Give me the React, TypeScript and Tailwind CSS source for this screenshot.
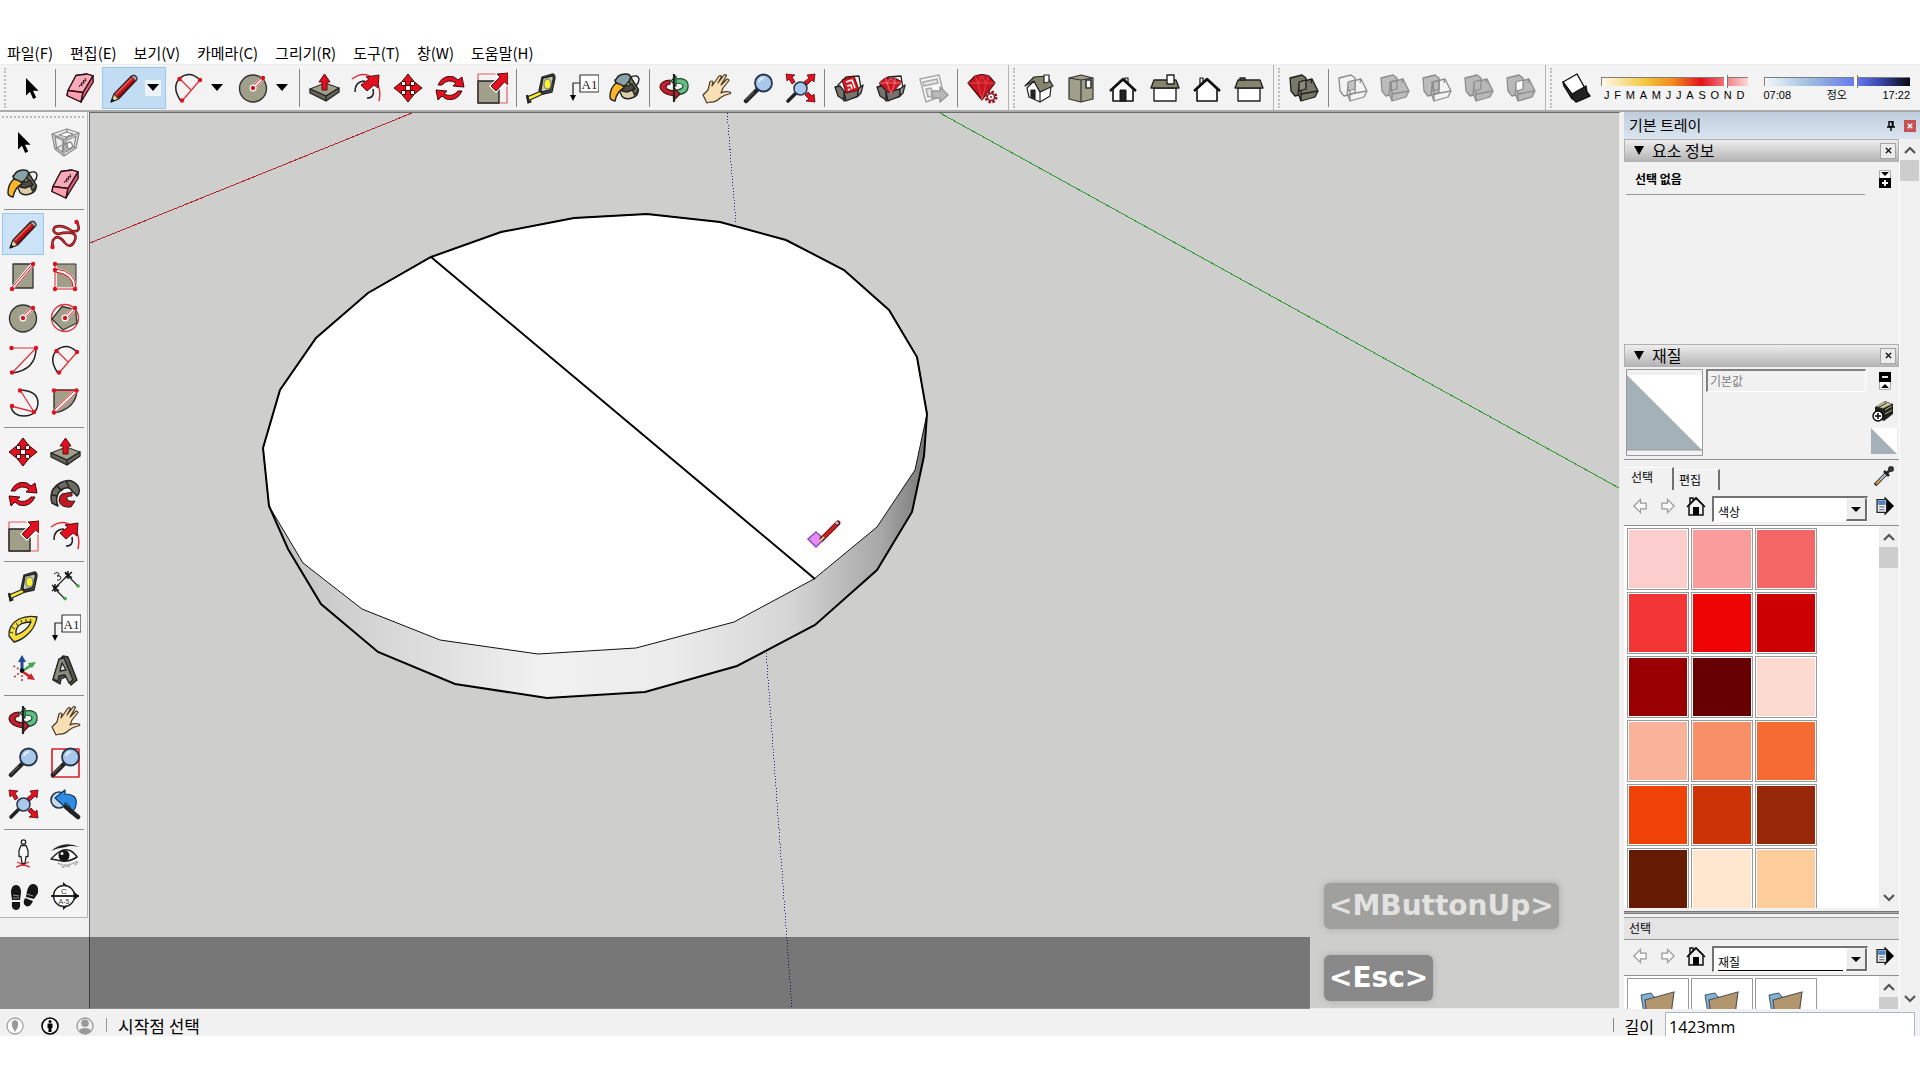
import React, { ReactNode } from "react";

const STONE = "#a0a08a";
const RED = "#e3101f";

function Icon({ children }: { children: ReactNode }) {
  return (
    <svg viewBox="0 0 32 32" className="size-8 shrink-0" fill="none" strokeLinejoin="round" aria-hidden="true">
      {children}
    </svg>
  );
}

function Dots({ at }: { at: number[][] }) {
  return (
    <g fill="#d8141f">
      {at.map(([x, y]) => (
        <circle key={`${x}-${y}`} cx={x} cy={y} r="2.2" />
      ))}
    </g>
  );
}

const cursor = <path d="M11 6v17.5l4-3.8 3.2 7.3 3-1.4-3.2-6.9h5.6z" fill="#000" />;

const eraser = (
  <g stroke="#2b1219" strokeWidth="1.3">
    <path d="M12 3.5 23 2l6 1.8-7.2 15.5L17 30 3 23.5l1-5z" fill="#f48ba0" />
    <path d="M12 3.5 23 2l6 1.8-10 16.7L4 18.5z" fill="#f9a9b8" />
    <path d="M4 18.5 19 20.5 17 30 3 23.5z" fill="#ff9fb0" />
    <path d="m19 20.500 10-16.700.3 6.200L17 30z" fill="#d9607a" />
    <path d="m15 15 1.500-2.500 1.500 1.500-.5-3.500 2.500 1-.8-3 2.600.6-.8-3" strokeWidth="1" />
  </g>
);

const pencil = (
  <g>
    <path d="m3 30 3-8L23 4.500q3-2.500 5 0 1.800 2.300-.5 4.500L10.500 27z" fill="#c5161d" stroke="#222" strokeWidth="1.200" />
    <path d="M7.500 22.500 24.500 5.500" stroke="#ef5a55" strokeWidth="1.500" />
    <path d="M9.800 25.500 27 8.500" stroke="#6f0a10" strokeWidth="1.500" />
    <path d="m23 4.500 4.800 4.700q2.500-2.400.4-4.700-2.200-2.400-5.200 0z" fill="#b99a9d" stroke="#222" />
    <path d="m3 30 3-8 4.500 5z" fill="#e8cf9a" stroke="#222" />
    <path d="m3 30 1.200-3.600 2.400 2z" fill="#111" />
  </g>
);

const bucket = (
  <g stroke="#222" strokeWidth="1.400">
    <path d="M22 5q7-3 8 2 0 4-3 7" />
    <path d="m6 8 14-5 9 14q1 6-5 8.500-7 3-11-1z" fill="#dccfa8" />
    <path d="m18 5 3-1 8.500 14-4 5z" fill="#6f6f60" />
    <path d="M12 14q6 1 11-2l3 5-8 3-5-1z" fill="#4c4c40" />
    <path d="M6 9q3-7 10-7t5 5-6 7-9-5z" fill="#87a3a5" />
    <path d="M7 11q8 2 8 5-7 3-9 13-5-1-5-4 0-9 6-14z" fill="#fbb52b" />
  </g>
);

const cube = (
  <g stroke="#8a8a8a" strokeWidth="1.300">
    <path d="m3 8 15-5 12 4-3 15-12 8L6 23z" fill="#ededed" />
    <path d="m3 8 12 5 15-6M15 13v17M18 3l-1 14-11 6M17 17l10 5M6 10.500l8 4-.5 12-6-5zM17 14.500l10-4.500-2 11-8 5z" />
    <path d="m10 9 8-3 6 2-7 3zM18 18q3-4 5 0t-4 5z" fill="#fff" />
  </g>
);

const freehand = (
  <g>
    <path d="M28 4q5 11-5 9Q13 6 6 9q-4 5 3 7 8-2 14-1 6 2 2 9-4 7-9 1-6-8-10-5-4 3-2 9" stroke="#6e0d13" strokeWidth="2.600" />
    <path d="M28 4q5 11-5 9Q13 6 6 9q-4 5 3 7 8-2 14-1 6 2 2 9-4 7-9 1-6-8-10-5-4 3-2 9" stroke="#c9343b" strokeWidth="1.200" />
    <Dots at={[[27.500, 4], [3.500, 29]]} />
  </g>
);

const rect = (
  <g>
    <path d="M6 4h20v24H6z" fill={STONE} stroke="#333" strokeWidth="1.300" />
    <path d="M5 29 26 4" stroke="#fff" strokeWidth="4" />
    <path d="m4.500 28 21-24M6.500 29.500l20-24" stroke={RED} />
    <Dots at={[[5, 29], [26, 4]]} />
  </g>
);

const rotRect = (
  <g>
    <path d="M6 4h21v24H6z" fill={STONE} stroke="#333" strokeWidth="1" />
    <path d="M6 4v25h20q0-17-20-19" stroke="#fff" strokeWidth="3.600" />
    <path d="M6 4v25h20M6 9q21 2 21 19M6 12q18 2 18 15" stroke={RED} />
    <Dots at={[[6, 4], [6, 10], [6, 29], [26, 29]]} />
  </g>
);

const circle = (
  <g>
    <circle cx="16" cy="16.500" r="13.500" fill={STONE} stroke="#333" strokeWidth="1.400" />
    <path d="m16 16 10-10" stroke="#fff" strokeWidth="4" />
    <path d="m15.500 15 9-9.500M17 17l9.500-10" stroke={RED} />
    <circle cx="16" cy="16" r="3.500" fill="#fff" />
    <Dots at={[[16, 16], [26, 6]]} />
  </g>
);

const polygon = (
  <g>
    <circle cx="16" cy="16" r="13.500" stroke="#e0303a" strokeWidth="1.300" />
    <path d="m13 4.500 13.500 3L28 21l-14 7L3 17z" fill={STONE} stroke="#333" strokeWidth="1.300" />
    <path d="m16 16 10-10" stroke="#fff" strokeWidth="4" />
    <path d="m15.500 15 9-9.500M17 17l9.500-10" stroke={RED} />
    <circle cx="16" cy="16" r="3.500" fill="#fff" />
    <Dots at={[[16, 16], [26, 6]]} />
  </g>
);

const arc = (
  <g>
    <path d="M29 4q0 22-24 25" stroke="#222" strokeWidth="1.500" />
    <path d="M5 4h24L5 29" stroke="#e0303a" strokeWidth="1.200" />
    <Dots at={[[4.500, 4], [29, 4], [5, 28.500]]} />
  </g>
);

const arc2 = (
  <g>
    <path d="M9 29Q-1 15 8 6q10-8 20 2" stroke="#222" strokeWidth="1.500" />
    <path d="M10 29 28 8M8 7l11 11" stroke="#e0303a" strokeWidth="1.300" />
    <Dots at={[[10, 28.500], [28, 8], [7.500, 7]]} />
  </g>
);

const arc3 = (
  <g>
    <path d="M14 4q17 1 17 13-1 13-14 13-11 0-13-9" stroke="#222" strokeWidth="1.500" />
    <path d="m4 20 23 6L13 4" stroke="#e0303a" strokeWidth="1.300" />
    <Dots at={[[13, 4.500], [5, 20], [27, 26]]} />
  </g>
);

const pie = (
  <g>
    <path d="M5 4h23q-1 19-23 23z" fill={STONE} stroke="#333" strokeWidth="1.400" />
    <path d="M5 26 27 5" stroke="#fff" strokeWidth="4" />
    <path d="M5 4.500h23M4 25 26 4M6 27 28 6" stroke={RED} />
    <Dots at={[[5, 4.500], [27.500, 4.500], [5, 26.500]]} />
  </g>
);

const move = (
  <g fill={RED} stroke="#3b0a0d" strokeWidth="1">
    <path d="m16 2 6 7.500h-3.500v4h-5v-4H10zM16 30l-6-7.500h3.500v-4h5v4H22zM2 16l7.500-6v3.500h4v5h-4V22zM30 16l-7.500 6v-3.500h-4v-5h4V10z" />
  </g>
);

const pushPull = (
  <g>
    <path d="m2 17 15-6 14 5-13 8z" fill={STONE} stroke="#333" strokeWidth="1.300" />
    <path d="m2 17 16 7v5L2 21zM18 24l13-8v4l-13 9z" fill="#65655a" stroke="#222" strokeWidth="1.300" />
    <path d="m16.500 2 5.500 8h-3v8h-5v-8h-3z" fill={RED} stroke="#5c0a10" />
  </g>
);

const rotate = (
  <g fill={RED} stroke="#3b0a0d" strokeWidth="1">
    <path d="M4 13Q9 2 20 5l4 3 4-3 2 10-11-1 3-3q-8-5-14 2z" />
    <path d="M28 19q-5 11-16 8l-4-3-4 4-2-10 11 1-3 3q8 4 14-3z" />
  </g>
);

const followMe = (
  <g stroke="#222" strokeWidth="1.500">
    <path d="M3 25Q-1 12 11 5 22-1 29 8q3 6-1 10l-5-5Q20 7 12 12q-7 7-3 16z" fill="#6a6a5f" />
    <path d="m8 8 5 5M17 3l3 6M3 17l6 1" />
    <path d="m13 16 10-2v4q-6 0-5 3t8 2l-4 6q-10 1-12-6 0-5 3-7z" fill="#c2181f" strokeWidth="1" />
  </g>
);

const scale = (
  <g>
    <path d="M2 2h29v29H2z" stroke="#e85b62" strokeWidth="1.200" />
    <path d="M2 9h21v22H2z" fill={STONE} stroke="#222" strokeWidth="1.400" />
    <path d="M32 1v12l-3.500-3L20 19l-5-5 9-9-3-3z" fill={RED} stroke="#fff" strokeWidth="3" />
    <path d="M32 1v12l-3.500-3L20 19l-5-5 9-9-3-3z" fill={RED} stroke="#5c0a10" />
  </g>
);

const offset = (
  <g>
    <path d="M2 7Q14-2 24 7q8 8 5 22" stroke="#e0303a" strokeWidth="1.500" />
    <path d="M5 20Q5 9 15 9M23 17q2 9-6 9" stroke="#222" strokeWidth="1.500" />
    <path d="m29 3-1 13-4-3-7 6-6-6 8-6-3-2z" fill={RED} stroke="#5c0a10" />
  </g>
);

const tape = (
  <g stroke="#222" strokeWidth="1.300">
    <path d="m2 25 14-6 2 3-13 6 1 2-3 1z" fill="#f5e92d" />
    <path d="M17 5 27 2q3 0 3 4l-3 14-9 2-4-3z" fill="#5a5a4e" />
    <path d="m18 6 9-2q2 0 1 4l-3 10-8 2-1-2z" fill="#c9c9b2" />
    <ellipse cx="22.500" cy="12" rx="3.500" ry="5" fill="#f8f42c" stroke="#888" />
    <path d="m2 23 2 8" strokeWidth="2.500" />
  </g>
);

const dimension = (
  <g>
    <path d="m6 18 13-13M4 17l13 13M16 3l13 13" stroke="#222" strokeWidth="1.200" />
    <path d="m3 15 7 6M3 21l7-6M6 14v8M16 2l7 6M16 8l7-6M19 1v8" stroke="#111" strokeWidth="1.400" />
    <circle cx="16" cy="28.500" r="1.800" fill="#3aab45" />
    <circle cx="29" cy="16" r="1.800" fill="#3aab45" />
    <path d="M5 4q4-3 5 0 0 2-2 2 4-1 4 2-1 3-4 2" stroke="#222" />
  </g>
);

const protractor = (
  <g stroke="#222" strokeWidth="1.300">
    <path d="M7 30 2 24Q1 13 12 7q9-4 18-2-2 11-9 17-6 6-14 8z" fill="#f3dd3b" />
    <path d="M9 23q-1-8 5-11 4-2 10-2-4 9-15 13z" fill="#f4f4f4" />
    <path d="m3 20 3 1m-1-6 3 2m1-6 2 3m3-6 1 3m4-4v3m5-3-1 3" strokeWidth=".9" />
  </g>
);

const label = (
  <g>
    <path d="M13 3h19v17H13z" fill="#fff" stroke="#333" strokeWidth="1.200" />
    <path d="M13 11H6v14" stroke="#222" strokeWidth="1.200" />
    <path d="m3 23 3 6 3-6z" fill="#000" />
    <text x="22.500" y="16.500" fontSize="13" textAnchor="middle" fill="#222" fontFamily="'Liberation Serif', serif">A1</text>
  </g>
);

const axes = (
  <g>
    <path d="M15 17 5 11M15 17 6 24M15 17v12" stroke="#b33" strokeDasharray="2 2" strokeWidth="1.500" />
    <path d="M13.500 17V8H11l4-7 4 7h-2.500v9z" fill="#1c4b96" />
    <path d="m15 16 7-5-1-2 8-1-4 6-1-1-8 5z" fill="#44a852" />
    <path d="m15 16 8 5 1-2 4 7-8-1 1-2-7-5z" fill="#c8242b" />
    <circle cx="15" cy="16.500" r="2.200" fill="#111" />
  </g>
);

const text3d = (
  <g stroke="#222" strokeWidth="1.300">
    <path d="m4 26 6-20 4-4 5 1 9 23-6 5-5-8-5 2-1 5z" fill="#55564d" />
    <path d="m4 25 6-20 5-1 9 22-4 3-4-8-6 1-1 5z" fill="#8b8b7c" />
    <path d="m11 17 2-8 4 7z" fill="#eee" />
  </g>
);

const orbit = (
  <g strokeWidth="1.200">
    <path d="M17 7q14-2 13 8 0 7-12 8l1-5q6-1 6-4 0-3-8-3z" fill="#63be85" stroke="#16482c" />
    <path d="m18 4-5 5 5 5z" fill="#8fdba6" stroke="#16482c" />
    <path d="M12 8Q2 9 2 15q1 7 14 9v4l6-6-6-6v3q-8-1-8-4 0-2 4-3z" fill="#bd222e" stroke="#4b0c12" />
    <path d="M16 2v28" stroke="#222" strokeWidth="2.200" />
  </g>
);

const pan = (
  <path d="m3 23 5-5 2-8q2-2 3 0l-1 4 7-10q2-1 2.500.5L18 11l6-8q2-1 2.500.5L21 13l6-6q2 0 2 1.500L23 16l-2 5q4-2 9-1 2 1-1 2-5 1-9 4-5 5-10 4l-3 1z" fill="#f8dfb5" stroke="#4a3a25" strokeWidth="1.200" />
);

const zoom = (
  <g>
    <path d="m4 29 11-11" stroke="#222" strokeWidth="4.500" strokeLinecap="round" />
    <path d="m4 28 8-8" stroke="#555" strokeWidth="1.200" />
    <circle cx="21.500" cy="11" r="8.500" fill="#a9c8ec" stroke="#26364b" strokeWidth="1.800" />
    <path d="M17 10q1-4 5-4" stroke="#e3f0fc" strokeWidth="2" />
  </g>
);

const zoomWindow = (
  <g>
    <path d="M3 3h27v28H3z" stroke="#d81e27" strokeWidth="1.600" />
    {zoom}
  </g>
);

const redCorners = (
  <g fill={RED} stroke="#5c0a10" strokeWidth=".8">
    <path d="m2 2 9 1-3 2 3 5-3 2-3-5-2 2zM31 2l-1 8-2-2-5 5-3-3 5-4-2-3zM31 30l-9-1 3-2-4-4 3-3 4 4 2-2z" />
  </g>
);

const zoomExtents = (
  <g>
    {redCorners}
    <path d="m4 29 8-8" stroke="#222" strokeWidth="3.600" strokeLinecap="round" />
    <circle cx="16.500" cy="16.500" r="6.500" fill="#a9c8ec" stroke="#26364b" strokeWidth="1.500" />
  </g>
);

const previous = (
  <g>
    <circle cx="10" cy="12" r="8" fill="#c5d9ee" stroke="#26364b" strokeWidth="1.600" />
    <path d="m6 10 10-8v4q13 0 11 11-1 6-6 8 1-9-5-10v4z" fill="#2f8be0" stroke="#123b66" strokeWidth="1.200" />
    <path d="m17 19 12 10" stroke="#222" strokeWidth="4.500" strokeLinecap="round" />
  </g>
);

const positionCamera = (
  <g stroke="#222" strokeWidth="1.300">
    <path d="m9 29 7-3 7 3M10 24l12 5M22 24l-12 5" stroke="#e0303a" />
    <circle cx="16.500" cy="4" r="2.200" fill="#fff" />
    <path d="M14 7.500h5l2 5v6h-2l-1 7h-3l-1-7h-2v-6z" fill="#fff" />
  </g>
);

const lookAround = (
  <g>
    <path d="M2 13Q14 2 31 9q-10-2-14 0Q8 10 2 13z" fill="#222" />
    <path d="M2 21q10-11 17-9 5 1 9 7-8 5-15 4-5-1-11-2z" fill="#fff" stroke="#222" strokeWidth="1.600" />
    <circle cx="15" cy="17.500" r="5.500" fill="#111" />
    <circle cx="13" cy="15.500" r="1.500" fill="#fff" />
    <path d="M9 25q8 5 20-2M13 29l8-1M26 27l3-3" stroke="#999" strokeWidth="1.500" strokeDasharray="2 1" />
  </g>
);

const walk = (
  <g fill="#161616">
    <path d="M4 13q0-8 5-8t5 8l-1 7H5zM5 22h8q1 8-4 8t-4-8zM20 11q2-8 7-7t4 9l-4 6-8-2zM18 18l8 3q-3 7-7 5-4-2-1-8z" />
    <path d="m6 15 6 1M6 18h6M20 14l6 2" stroke="#999" />
  </g>
);

const section = (
  <g>
    <path d="m14 2 16 14-16 14z" fill="#111" />
    <circle cx="15" cy="16" r="10.500" fill="#fff" stroke="#222" strokeWidth="1.400" />
    <path d="M2 16h28" stroke="#111" strokeWidth="1.800" />
    <g fill="#333" fontFamily="'Liberation Sans', sans-serif" textAnchor="middle">
      <text x="15" y="14" fontSize="8">C</text>
      <text x="15" y="24" fontSize="7">A-5</text>
    </g>
  </g>
);

const openBox = (
  <g stroke="#222" strokeWidth="1.300">
    <path d="m5 13 8-8 13-1 2 13-4 8-13 4z" fill="#f4f4f4" />
    <path d="m2 15 5-1 4 5v9l-6-4zM11 20l14-3v7l-12 5z" fill="#77736c" />
    <path d="m25 17 5-4-2 8-3 3z" fill="#a09c92" />
  </g>
);

const warehouse = (
  <g>
    {openBox}
    <path d="m9 8 12-4 5 14-13 3z" fill="#d81924" stroke="#5c0a10" />
    <path d="m13 10 6-2 3 8m-8-2 4-1 1 4m-4 1 2-1" stroke="#fff" strokeWidth="1.600" />
  </g>
);

const gem = (
  <g stroke="#5c0a10">
    <path d="m4 11 6-5h10l7 4-11 12z" fill="#cf1622" />
    <path d="M4 11h23M10 6l2 5 4 11 4-11 0-5M12 11l4-5 4 5" stroke="#f38b8b" strokeWidth=".8" />
  </g>
);

const extensions = (
  <g>
    {openBox}
    {gem}
  </g>
);

const layout = (
  <g stroke="#a9a9a9" strokeWidth="1.500">
    <path d="m3 7 19-4 5 20-18 7z" fill="#f8f8f8" />
    <path d="m6 10 14-3 1 4-14 3zM9 17l5-1 2 8-5 1z" fill="#e2e2e2" />
    <path d="M15 19h8v-4l8 8-8 7v-4h-8z" fill="#b9b9b9" stroke="#999" />
  </g>
);

const rubyManager = (
  <g>
    <path d="m2 11 7-7q7-3 14 0l6 7-13 17z" fill="#c81622" stroke="#4b0c12" strokeWidth="1.200" />
    <path d="M2 11h27M9 4l3 7 4 17 4-17 3-7M12 11l4-7 4 7" stroke="#e84f55" strokeWidth=".8" />
    <circle cx="25" cy="25" r="5" fill="#f3f3f3" stroke="#8f1f26" strokeWidth="3" strokeDasharray="2.400 1.500" />
    <circle cx="25" cy="25" r="3.600" fill="#f3f3f3" stroke="#8f1f26" strokeWidth="1.600" />
    <circle cx="25" cy="25" r="1" fill="#8f1f26" />
  </g>
);

const isoHouse = (
  <g stroke="#222" strokeWidth="1.200">
    <path d="m4 16 7-7 6 11v10L6 25zM17 20l11-6-1 10-10 6z" fill="#fff" />
    <path d="m2 14 9-9 13-1 6 10-13 6-6-11z" fill="#85856f" />
    <path d="M8 18h4v9l-4-2z" fill="#222" />
    <path d="M21 3h5v7l-5 1z" fill="#fff" />
  </g>
);

const topHouse = (
  <g stroke="#333" strokeWidth="1.200">
    <path d="M4 6 16 3l12 3v21l-12 3-12-3z" fill={STONE} />
    <path d="M16 8v22M4 6l12 2 12-2" />
    <path d="M21 8h5v8h-5z" fill="#fff" strokeWidth="1.600" />
  </g>
);

const gable = (chimneyX: number, door: boolean) => (
  <g stroke="#111">
    <path d={`M${chimneyX} 6h3v7h-3z`} fill="#fff" strokeWidth="1.200" />
    <path d="M6 17v12h20V17L16 8z" fill="#fff" strokeWidth="1.600" />
    <path d="M3 19 16 7l13 12" strokeWidth="2.400" />
    {door && <path d="M13 18h6v11h-6z" fill="#222" />}
  </g>
);

const sideHouse = (chimney: ReactNode) => (
  <g stroke="#222" strokeWidth="1.400">
    <path d="M5 16h22v13H5z" fill="#fff" />
    <path d="M5 8h22l3 8H2z" fill="#85856f" />
    {chimney}
  </g>
);

const rightHouse = sideHouse(<path d="M18 3h7v9h-7z" fill="#fff" />);
const leftHouse = sideHouse(<path d="M7 6h5v2H7z" fill="#85856f" />);

function solids(stroke: string, a: string, b: string, mid: string) {
  return (
    <g stroke={stroke} strokeWidth="1.300">
      <path d="m2 6 12-3 4 3v15L7 24l-4-5z" fill={a} />
      <path d="m12 10 12-3 6 12-3 6-14 4-3-8z" fill={b} />
      <path d="m13 22 17-3M13 22v7M12 10l1 12M24 7l-1 4" />
      <path d="m11 10 7-2v9l-7 2z" fill={mid} />
    </g>
  );
}

const shadow = (
  <g stroke="#111" strokeWidth="1.400">
    <path d="M3 10 17 2l9 16-14 8z" fill="#fff" />
    <path d="m12 22 14-8 1 6 3 4-14 6-4-4z" fill="#222" />
    <path d="m3 10 9 12v5L4 14z" fill="#333" />
  </g>
);

type Tool = { name: string; icon: ReactNode };
const t = (name: string, icon: ReactNode): Tool => ({ name, icon });

function ToolButton({ tool, active = false }: { tool: Tool; active?: boolean }) {
  return (
    <button
      type="button"
      aria-label={tool.name}
      title={tool.name}
      className={
        active
          ? "flex h-[42px] w-[42px] shrink-0 items-center justify-center border border-[#99c8ee] bg-[#cce3f7]"
          : "flex h-[42px] w-[42px] shrink-0 items-center justify-center"
      }
    >
      <Icon>{tool.icon}</Icon>
    </button>
  );
}

function Caret() {
  return (
    <svg viewBox="0 0 12 8" className="h-2 w-3" aria-hidden="true">
      <path d="M0 0h12L6 7z" fill="#000" />
    </svg>
  );
}

function SplitButton({ tool, active = false }: { tool: Tool; active?: boolean }) {
  return (
    <div
      className={
        active
          ? "flex h-[42px] w-16 shrink-0 items-center border border-[#99c8ee] bg-[#c2dcf3]"
          : "flex h-[42px] w-16 shrink-0 items-center"
      }
    >
      <button type="button" aria-label={tool.name} className="flex w-[42px] items-center justify-center">
        <Icon>{tool.icon}</Icon>
      </button>
      <button
        type="button"
        aria-label={`${tool.name} 옵션`}
        className={active ? "flex h-4 w-4 items-center justify-center bg-[#eef3f8]" : "flex h-4 w-4 items-center justify-center"}
      >
        <Caret />
      </button>
    </div>
  );
}

const Divider = () => (
  <div className="flex w-[7px] shrink-0 justify-center">
    <div className="h-[38px] w-px bg-[#858585]" />
  </div>
);

const Grip = ({ first = false }: { first?: boolean }) => (
  <div className={first ? "flex h-full w-[10px] shrink-0 items-center pl-1" : "ml-[3px] flex h-full w-[10px] shrink-0 items-center border-l border-[#b4b4b4] pl-1"}>
    <div className="h-[40px] border-l-2 border-dotted border-[#bdbdbd]" />
  </div>
);

const menus = ["파일(F)", "편집(E)", "보기(V)", "카메라(C)", "그리기(R)", "도구(T)", "창(W)", "도움말(H)"];

const editTools = [t("밀기/끌기", pushPull), t("오프셋", offset), t("이동", move), t("회전", rotate), t("배율", scale)];
const noteTools = [t("줄자", tape), t("텍스트", label), t("페인트통", bucket)];
const cameraTools = [t("궤도", orbit), t("팬", pan), t("확대/축소", zoom), t("범위 확대", zoomExtents)];
const warehouseTools = [t("3D Warehouse", warehouse), t("Extension Warehouse", extensions), t("LayOut", layout)];
const viewTools = [
  t("등각", isoHouse),
  t("상단", topHouse),
  t("전면", gable(18, true)),
  t("우측", rightHouse),
  t("후면", gable(9, false)),
  t("좌측", leftHouse),
];
const solidTools = [
  t("교차", solids("#8d8d8d", "none", "none", "#c4c4c4")),
  t("결합", solids("#8d8d8d", "#bcbcbc", "#bcbcbc", "none")),
  t("빼기", solids("#8d8d8d", "#bcbcbc", "none", "none")),
  t("트림", solids("#8d8d8d", "#b8b8b8", "#b8b8b8", "#b8b8b8")),
  t("분할", solids("#8d8d8d", "#b8b8b8", "#b8b8b8", "#fff")),
];

const tools = (list: Tool[]) => list.map((x) => <ToolButton key={x.name} tool={x} />);

const thumb =
  "[&::-webkit-slider-thumb]:-mt-[3px] [&::-webkit-slider-thumb]:h-[13px] [&::-webkit-slider-thumb]:w-1 [&::-webkit-slider-thumb]:appearance-none [&::-webkit-slider-thumb]:border-r [&::-webkit-slider-thumb]:border-[#777] [&::-webkit-slider-thumb]:bg-white [&::-webkit-slider-runnable-track]:h-[9px] [&::-webkit-slider-runnable-track]:border-t [&::-webkit-slider-runnable-track]:border-l [&::-webkit-slider-runnable-track]:border-[#7d7d7d]";

function TopToolbar() {
  return (
    <div className="flex h-12 shrink-0 items-center overflow-hidden border-t border-[#ececec] border-b-2 border-b-[#a9a9a9] bg-[#f3f3f3]">
      <Grip first />
      <ToolButton tool={t("선택", cursor)} />
      <Divider />
      <ToolButton tool={t("지우개", eraser)} />
      <div className="flex gap-px pl-px">
        <SplitButton tool={t("선", pencil)} active />
        <SplitButton tool={t("호", arc2)} />
        <SplitButton tool={t("원", circle)} />
      </div>
      <Divider />
      {tools(editTools)}
      <Divider />
      {tools(noteTools)}
      <Divider />
      {tools(cameraTools)}
      <Divider />
      {tools(warehouseTools)}
      <Divider />
      {tools([t("확장 관리자", rubyManager)])}
      <div className="w-0.5 shrink-0" />
      <Grip />
      {tools(viewTools)}
      <Grip />
      {tools([t("외부 셸", solids("#1e1e1a", "#77776a", "#77776a", "#8a8a7a"))])}
      <Divider />
      {tools(solidTools)}
      <Grip />
      {tools([t("그림자", shadow)])}
      <div className="flex flex-1 gap-4 pr-[10px] pl-1 font-['Liberation_Sans','Noto_Sans_CJK_KR',sans-serif] text-[11px] leading-3 text-black">
        <div className="flex min-w-0 flex-1 flex-col">
          <input
            type="range"
            aria-label="날짜"
            defaultValue={86}
            className={`${thumb} h-[13px] w-full appearance-none bg-transparent [&::-webkit-slider-runnable-track]:bg-[linear-gradient(90deg,#fff9e8,#f3c63c_30%,#f08c1e_48%,#e3131a_68%,#ee6a70_82%,#fbdada)]`}
          />
          <div className="mt-px flex justify-between px-[3px]">
            {"JFMAMJJASOND".split("").map((m, i) => (
              <span key={i}>{m}</span>
            ))}
          </div>
        </div>
        <div className="flex min-w-0 flex-1 flex-col">
          <input
            type="range"
            aria-label="시간"
            defaultValue={63}
            className={`${thumb} h-[13px] w-full appearance-none bg-transparent [&::-webkit-slider-runnable-track]:bg-[linear-gradient(90deg,#f4f8fb,#9fbfe0_30%,#5f74ea_65%,#3a47a8_80%,#05060c)]`}
          />
          <div className="mt-px flex justify-between">
            <span>07:08</span>
            <span>정오</span>
            <span>17:22</span>
          </div>
        </div>
      </div>
    </div>
  );
}

const sideGroups: Tool[][] = [
  [t("선택", cursor), t("구성 요소 만들기", cube), t("페인트통", bucket), t("지우개", eraser)],
  [
    t("선", pencil),
    t("프리핸드", freehand),
    t("직사각형", rect),
    t("회전된 직사각형", rotRect),
    t("원", circle),
    t("다각형", polygon),
    t("호", arc),
    t("2점 호", arc2),
    t("3점 호", arc3),
    t("파이", pie),
  ],
  [t("이동", move), t("밀기/끌기", pushPull), t("회전", rotate), t("따라가기", followMe), t("배율", scale), t("오프셋", offset)],
  [t("줄자", tape), t("치수", dimension), t("각도기", protractor), t("텍스트", label), t("축", axes), t("3D 텍스트", text3d)],
  [t("궤도", orbit), t("팬", pan), t("확대/축소", zoom), t("창 확대", zoomWindow), t("범위 확대", zoomExtents), t("이전", previous)],
  [t("카메라 배치", positionCamera), t("둘러보기", lookAround), t("걷기", walk), t("단면", section)],
];

function SideToolbar() {
  return (
    <aside className="w-[89px] shrink-0 overflow-hidden bg-[#f1f1f1]">
      <div className="w-[88px] border-r border-b border-[#b4b4b4] bg-[#f4f4f4] pt-1 pl-0.5">
        <div className="mb-[3px] h-0.5 w-[82px] border-t-2 border-dotted border-[#b9b9b9]" />
        {sideGroups.map((group, gi) => (
          <div key={gi}>
            {gi > 0 && (
              <div className="flex h-2 items-center px-0.5">
                <div className="h-px w-20 bg-[#8c8c8c]" />
              </div>
            )}
            <div className="grid w-[84px] grid-cols-2">
              {group.map((tool, i) => (
                <ToolButton key={tool.name} tool={tool} active={gi === 1 && i === 0} />
              ))}
            </div>
          </div>
        ))}
      </div>
    </aside>
  );
}

const topRim = "263,448 280,390 316,338 368,293 431,257 501,232 574,218 647,214 720,222 786,240 844,270 889,310 917,357 927,414";
const topFace = `${topRim} 915,470 877,527 814,579 734,622 636,648 538,654 440,640 362,609 303,563 269,506`;
const baseRim = "927,414 924,456 912,512 877,570 815,625 737,666 645,692 547,698 455,684 378,652 321,604 288,549 269,506 263,448";

function Viewport() {
  return (
    <main className="relative min-w-0 flex-1 overflow-hidden border border-[#ededed] border-t-[#6b6b6b] border-l-[#6b6b6b] bg-[#cececd]">
      <svg viewBox="90 113 1529 895" preserveAspectRatio="xMinYMin slice" className="absolute inset-0 h-full w-full" fill="none" role="img" aria-label="모델">
        <defs>
          <linearGradient id="rim" gradientUnits="userSpaceOnUse" x1="263" y1="0" x2="927" y2="0">
            <stop offset="0" stopColor="#bdbdbd" />
            <stop offset=".12" stopColor="#cfcfcf" />
            <stop offset=".42" stopColor="#f1f1f1" />
            <stop offset=".62" stopColor="#ebebeb" />
            <stop offset=".8" stopColor="#d4d4d4" />
            <stop offset=".93" stopColor="#a8a8a8" />
            <stop offset="1" stopColor="#787878" />
          </linearGradient>
        </defs>
        <g shapeRendering="crispEdges">
          <path d="M90 243 412 113" stroke="#b3252b" />
          <path d="M940 113 1619 488" stroke="#2f9a34" />
          <path d="m727 113 9 109M766 650l26 359" stroke="#23238c" strokeDasharray="1 2" />
        </g>
        <polygon points={`${topRim} ${baseRim}`} fill="url(#rim)" />
        <polygon points={topFace} fill="#fff" stroke="#111" strokeWidth="1" />
        <polyline points={topRim} stroke="#000" strokeWidth="2" />
        <polyline points={baseRim} stroke="#000" strokeWidth="2" />
        <path d="m431 257 384 322" stroke="#000" strokeWidth="2" />
        <path d="m816 532 8 7-8 8-8-8z" fill="#e88cf5" stroke="#8a4fb0" strokeWidth="1.500" />
        <path d="m822 539 16-16" stroke="#5f1216" strokeWidth="5" strokeLinecap="round" />
        <path d="m823 538 13-13" stroke="#d3201f" strokeWidth="3" />
        <path d="m836 524 2-2" stroke="#c9b3b3" strokeWidth="3" />
        <path d="m820 541 4-4" stroke="#d9c6a0" strokeWidth="2" />
      </svg>
      <div className="absolute right-[55px] bottom-[7px] flex w-[240px] flex-col items-start gap-[26px] font-['DejaVu_Sans',sans-serif] text-[28px] leading-[46px] font-bold">
        <kbd className="rounded-md bg-[#a0a09f] px-[5px] font-[inherit] text-[#e2e2e1] shadow-[0_0_6px_#aaaaaa]">&lt;MButtonUp&gt;</kbd>
        <kbd className="rounded-md bg-[#898989] px-[5px] font-[inherit] text-white shadow-[0_0_6px_#aaaaaa]">&lt;Esc&gt;</kbd>
      </div>
    </main>
  );
}

function Chevron({ down = false }: { down?: boolean }) {
  return (
    <svg viewBox="0 0 12 8" className="h-2 w-3" fill="none" aria-hidden="true">
      <path d={down ? "m1 1 5 5 5-5" : "m1 7 5-5 5 5"} stroke="#555" strokeWidth="2.200" />
    </svg>
  );
}

function ScrollBar({ down = true }: { down?: boolean }) {
  return (
    <div className="flex w-[19px] shrink-0 flex-col items-center bg-[#f0f0f0]">
      <button type="button" aria-label="위로" className="flex h-[21px] shrink-0 items-center justify-center">
        <Chevron />
      </button>
      <div className="h-[21px] w-full bg-[#cdcdcd]" />
      {down && (
        <button type="button" aria-label="아래로" className="mt-auto flex h-[21px] items-center justify-center">
          <Chevron down />
        </button>
      )}
    </div>
  );
}

function PanelHeader({ title }: { title: string }) {
  return (
    <div className="flex h-[23px] shrink-0 items-center border border-[#b0b0b0] bg-linear-to-b from-[#eeeeee] to-[#b5b5b5] pr-0.5 pl-[9px]">
      <svg viewBox="0 0 10 9" className="h-[9px] w-[10px]" aria-hidden="true">
        <path d="M0 0h10L5 9z" fill="#000" />
      </svg>
      <h2 className="ml-2 flex-1 pb-0.5 text-[16px] leading-5">{title}</h2>
      <button type="button" aria-label={`${title} 닫기`} className="flex h-4 w-4 items-center justify-center border border-[#a5a5a5] bg-[#ececec]">
        <svg viewBox="0 0 8 8" className="h-[7px] w-[7px]" aria-hidden="true">
          <path d="m1 1 6 6M7 1 1 7" stroke="#000" strokeWidth="1.600" />
        </svg>
      </button>
    </div>
  );
}

const navArrow = "M2 9 9 2v4h6v6H9v4z";

function LibraryNav({ value, underlined = false }: { value: string; underlined?: boolean }) {
  return (
    <div className="flex shrink-0 items-start border-b border-[#8f8f8f] pb-[3px] pl-2">
      <button type="button" aria-label="뒤로" className="mt-px flex w-4 justify-center">
        <svg viewBox="0 0 17 18" className="h-[18px] w-4" aria-hidden="true">
          <path d={navArrow} fill="#fafafa" stroke="#999" strokeWidth="1.300" />
        </svg>
      </button>
      <button type="button" aria-label="앞으로" className="mt-px ml-3 flex w-4 justify-center">
        <svg viewBox="0 0 17 18" className="h-[18px] w-4 -scale-x-100" aria-hidden="true">
          <path d={navArrow} fill="#fafafa" stroke="#999" strokeWidth="1.300" />
        </svg>
      </button>
      <button type="button" aria-label="홈" className="ml-2.5">
        <svg viewBox="0 0 20 20" className="h-5 w-5" fill="none" aria-hidden="true">
          <path d="M4 9V2h3v4M3 9v10h14V9l-7-7z" fill="#eee" stroke="#111" strokeWidth="1.500" />
          <path d="m1 11 9-9 9 9" stroke="#111" strokeWidth="1.600" />
          <path d="M7 11h6v8H7z" fill="#000" />
        </svg>
      </button>
      <div className="relative ml-[6px] h-[26px] w-[156px] border-t-2 border-r border-b border-l-2 border-[#737373] border-r-white border-b-white bg-white">
        <select aria-label="라이브러리" defaultValue={value} className="h-full w-full appearance-none px-1 pb-[3px] text-[12px] leading-4">
          <option>{value}</option>
        </select>
        {underlined && <span className="pointer-events-none absolute bottom-0 left-1 h-px w-[125px] bg-black" />}
        <span className="pointer-events-none absolute top-0 right-0 flex h-[23px] w-[21px] items-center justify-center border border-r-2 border-b-2 border-[#f8f8f8] border-r-[#6e6e6e] border-b-[#6e6e6e] bg-[#ededed]">
          <svg viewBox="0 0 10 5" className="h-[5px] w-[10px]" aria-hidden="true">
            <path d="M0 0h10L5 5z" fill="#000" />
          </svg>
        </span>
      </div>
      <button type="button" aria-label="세부 정보" className="ml-2">
        <svg viewBox="0 0 17 18" className="h-5 w-[18px]" aria-hidden="true">
          <path d="M8 0l9 9-9 9z" fill="#000" />
          <path d="M1 3h9v12H1z" fill="#eef4fb" stroke="#222" strokeWidth="1.200" />
          <path d="M2 4h7v4H2z" fill="#4e83c4" />
          <path d="M3 10h5M3 12.500h5" stroke="#555" />
        </svg>
      </button>
    </div>
  );
}

const swatches = [
  ["#fbcdcd", "bg-[#fbcdcd]"],
  ["#fa9c9c", "bg-[#fa9c9c]"],
  ["#f56666", "bg-[#f56666]"],
  ["#f33535", "bg-[#f33535]"],
  ["#ee0404", "bg-[#ee0404]"],
  ["#cc0003", "bg-[#cc0003]"],
  ["#990003", "bg-[#990003]"],
  ["#660003", "bg-[#660003]"],
  ["#fcdacf", "bg-[#fcdacf]"],
  ["#f9b39b", "bg-[#f9b39b]"],
  ["#f98f67", "bg-[#f98f67]"],
  ["#f66a34", "bg-[#f66a34]"],
  ["#f04206", "bg-[#f04206]"],
  ["#cc3408", "bg-[#cc3408]"],
  ["#972807", "bg-[#972807]"],
  ["#661b04", "bg-[#661b04]"],
  ["#fee6cf", "bg-[#fee6cf]"],
  ["#fccd9a", "bg-[#fccd9a]"],
];

function PaneToggle({ open }: { open: boolean }) {
  return (
    <svg viewBox="0 0 12 18" className="h-[18px] w-3" aria-hidden="true">
      <path d="M.5.500h11v17H.5z" fill="#fff" stroke="#aaa" />
      <path d={open ? "M0 0h12v10H0z" : "M0 8h12v10H0z"} fill="#000" />
      <path d={open ? "M3 5h6" : "M3 13h6M6 10v6"} stroke="#fff" strokeWidth="1.800" />
      <path d={open ? "m2 16 4-4 4 4z" : "m2 2 4 4 4-4z"} fill="#000" />
    </svg>
  );
}

function Tray() {
  return (
    <aside className="flex w-[300px] shrink-0 flex-col overflow-hidden bg-[#f1f1f1] pl-1">
      <div className="flex h-[27px] shrink-0 items-center bg-linear-to-b from-[#bfccdb] to-[#dbe5f1] pr-1 pl-[5px]">
        <h1 className="flex-1 pb-0.5 text-[15px] leading-5">기본 트레이</h1>
        <button type="button" aria-label="고정">
          <svg viewBox="0 0 8 10" className="h-[10px] w-2" fill="none" aria-hidden="true">
            <path d="M2 .700h4v5H2zM0 6h8M4 6v4M5.300 1v5" stroke="#000" strokeWidth="1.400" />
          </svg>
        </button>
        <button type="button" aria-label="닫기" className="ml-[9px] flex h-3 w-3 items-center justify-center bg-[#c75050]">
          <svg viewBox="0 0 8 8" className="h-[6px] w-[6px]" aria-hidden="true">
            <path d="m1 1 6 6M7 1 1 7" stroke="#fff" strokeWidth="2" />
          </svg>
        </button>
      </div>
      <div className="flex min-h-0 flex-1 pr-px">
        <div className="flex min-w-0 flex-1 flex-col">
          <PanelHeader title="요소 정보" />
          <section className="flex h-[182px] shrink-0 items-start pt-0.5 pr-2 pl-0.5">
            <p className="mr-[14px] flex-1 border-b border-[#999] pt-[7px] pb-[7px] pl-[9px] text-[12px] leading-4 font-bold">선택 없음</p>
            <button type="button" aria-label="세부 정보 표시" className="mt-[6px]">
              <PaneToggle open={false} />
            </button>
          </section>
          <PanelHeader title="재질" />
          <section className="flex shrink-0 border-b border-[#8f8f8f] px-0.5 pt-0.5 pb-[3px]">
            <svg viewBox="0 0 77 87" className="h-[87px] w-[77px] shrink-0" aria-hidden="true">
              <path d="M.5.500h76v86H.5z" fill="#f1f1f1" stroke="#999" />
              <path d="M1 6h75v75H1z" fill="#fff" />
              <path d="m1 6 75 75H1z" fill="#a5b1b9" />
              <path d="M1 81h75" stroke="#999" />
            </svg>
            <input
              aria-label="재질 이름"
              defaultValue="기본값"
              disabled
              className="ml-[3px] h-[23px] w-[160px] shrink-0 border-t-2 border-r border-b border-l-2 border-[#808080] border-r-white border-b-white bg-[#f1f1f1] px-0.5 pb-0.5 text-[12px] leading-4 text-[#808080]"
            />
            <div className="flex flex-1 flex-col items-end gap-[10px] pt-[3px]">
              <button type="button" aria-label="보조 창 숨기기" className="mr-[6px]">
                <PaneToggle open />
              </button>
              <button type="button" aria-label="재질 만들기" className="mr-[3px]">
                <svg viewBox="0 0 22 22" className="h-[22px] w-[22px]" aria-hidden="true">
                  <path d="m3 7 10-6 8 3v10l-9 7-9-4z" fill="#23231e" />
                  <path d="m5 6 8-4 6 2-8 4zM13 10l7-4M13 14l7-4" fill="#ddd6a8" stroke="#b7b08a" />
                  <path d="m7 7 8-4" stroke="#222" />
                  <circle cx="6" cy="16" r="5" fill="#fff" stroke="#000" strokeWidth="1.400" />
                  <path d="M3 16h6M6 13v6" stroke="#000" strokeWidth="1.400" />
                </svg>
              </button>
              <button type="button" aria-label="기본 재질 설정" className="-mt-1">
                <svg viewBox="0 0 26 26" className="h-[26px] w-[26px]" aria-hidden="true">
                  <path d="M0 0h26v26H0z" fill="#fff" />
                  <path d="m0 0 26 26H0z" fill="#a5b1b9" />
                </svg>
              </button>
            </div>
          </section>
          <div className="flex h-[36px] shrink-0 items-start pt-[5px] pr-1 text-[12px] leading-4" role="tablist">
            <button type="button" role="tab" aria-selected="true" className="mt-0.5 h-[23px] w-[50px] border-t border-r-2 border-white border-r-[#707070] pb-1 pl-[7px] text-left">
              선택
            </button>
            <button type="button" role="tab" aria-selected="false" className="mt-1 h-[21px] w-[46px] border-t border-r-2 border-white border-r-[#707070] pl-[5px] text-left">
              편집
            </button>
            <button type="button" aria-label="샘플 페인트" className="ml-auto">
              <svg viewBox="0 0 22 22" className="h-[22px] w-[22px]" fill="none" aria-hidden="true">
                <path d="M2 20 13 9" stroke="#222" strokeWidth="3.600" />
                <path d="M7 15l6-6" stroke="#b8c4cf" strokeWidth="2" />
                <path d="m3 19 4-4" stroke="#e0a23a" strokeWidth="2" />
                <path d="m11 6 5 5M14 8l4-4" stroke="#222" strokeWidth="2.600" />
                <circle cx="18" cy="4" r="3" fill="#333" />
              </svg>
            </button>
          </div>
          <LibraryNav value="색상" />
          <div className="flex min-h-0 flex-1 bg-white">
            <div className="flex-1 overflow-hidden pt-0.5 pl-[3px]">
              <div className="grid w-[190px] grid-cols-3 gap-0.5">
                {swatches.map(([name, bg]) => (
                  <button key={name} type="button" aria-label={name} className="h-[62px] border border-[#9a9a9a] p-px">
                    <span className={`block h-full w-full ${bg}`} />
                  </button>
                ))}
              </div>
            </div>
            <ScrollBar />
            <div className="w-px bg-[#f1f1f1]" />
          </div>
          <div className="mt-[3px] h-[3px] shrink-0 border-t border-b border-[#777] bg-[#aaa]" />
          <div className="mt-[3px] h-[23px] shrink-0 border-t border-b border-[#999] bg-[#e5e4e5] pl-[5px] text-[12px] leading-5">선택</div>
          <div className="h-[6px] shrink-0" />
          <LibraryNav value="재질" underlined />
          <div className="flex h-[33px] shrink-0 overflow-hidden bg-white">
            <div className="flex flex-1 gap-0.5 pt-0.5 pl-[3px]">
              {[1, 2, 3].map((n) => (
                <button key={n} type="button" aria-label={`재질 폴더 ${n}`} className="flex h-[62px] w-[62px] justify-center border border-[#9a9a9a] pt-3">
                  <svg viewBox="0 0 36 36" className="h-9 w-9" aria-hidden="true">
                    <path d="m1 4 10-2 2 3 3 2v28H6z" fill="#7fb0d6" stroke="#456" />
                    <path d="m5 9 29-8-4 30-22 3z" fill="#b3966e" stroke="#555" strokeWidth="1.200" />
                  </svg>
                </button>
              ))}
            </div>
            <ScrollBar down={false} />
            <div className="w-px bg-[#f1f1f1]" />
          </div>
        </div>
        <div className="flex border-l border-white">
          <ScrollBar />
        </div>
      </div>
    </aside>
  );
}

function StatusBar() {
  return (
    <footer className="flex h-[27px] shrink-0 items-center overflow-hidden bg-[#f1f1f1] pl-[6px]">
      <div className="flex gap-[17px] pt-[6px]">
        <button type="button" aria-label="지리적 위치">
          <svg viewBox="0 0 18 18" className="size-[18px]" aria-hidden="true">
            <circle cx="9" cy="9" r="8" fill="#fff" stroke="#a3a3a3" strokeWidth="1.300" />
            <path d="M9 15Q5 9 6 5.500 7 3 9 3t3 2.500Q13 9 9 15z" fill="#999" />
          </svg>
        </button>
        <button type="button" aria-label="크레디트">
          <svg viewBox="0 0 18 18" className="size-[18px]" aria-hidden="true">
            <circle cx="9" cy="9" r="8" fill="#fff" stroke="#000" strokeWidth="1.600" />
            <circle cx="9" cy="4.600" r="1.500" />
            <path d="M6.500 6.500h5V11h-1v4h-3v-4h-1z" />
          </svg>
        </button>
        <button type="button" aria-label="로그인">
          <svg viewBox="0 0 18 18" className="size-[18px]" aria-hidden="true">
            <circle cx="9" cy="9" r="8" fill="#f1f1f1" stroke="#999" strokeWidth="1.300" />
            <circle cx="9" cy="6.300" r="3.800" fill="#999" />
            <path d="M3 14q1-3 6-3t6 3q-3 3-6 3t-6-3z" fill="#999" />
          </svg>
        </button>
      </div>
      <div className="mt-1 ml-3 h-[14px] w-px bg-[#999]" />
      <p className="mt-1.5 ml-[11px] flex-1 text-[17px] leading-6">시작점 선택</p>
      <div className="mt-1 h-[14px] w-px bg-[#888]" />
      <label htmlFor="length" className="mt-1.5 ml-[11px] text-[16px] leading-6">
        길이
      </label>
      <input
        id="length"
        defaultValue="1423mm"
        className="mt-[3px] mr-[5px] ml-[11px] h-[30px] w-[250px] shrink-0 self-start border border-[#a9b8c9] bg-white px-[3px] font-['Open_Sans',sans-serif] text-[16px] leading-6"
      />
    </footer>
  );
}

export default function App() {
  return (
    <div className="flex h-screen flex-col overflow-hidden bg-white pt-[41px] pb-[44px] font-['Noto_Sans_CJK_KR',sans-serif] text-black">
      <nav className="flex h-[23px] shrink-0 items-center gap-[17px] pl-[7px] text-[15px] leading-5">
        {menus.map((m) => (
          <button key={m} type="button">
            {m}
          </button>
        ))}
      </nav>
      <TopToolbar />
      <div className="relative flex min-h-0 flex-1">
        <SideToolbar />
        <Viewport />
        <Tray />
        <div className="pointer-events-none absolute bottom-0 left-0 h-[72px] w-[68.25%] bg-black/42" />
      </div>
      <StatusBar />
    </div>
  );
}
